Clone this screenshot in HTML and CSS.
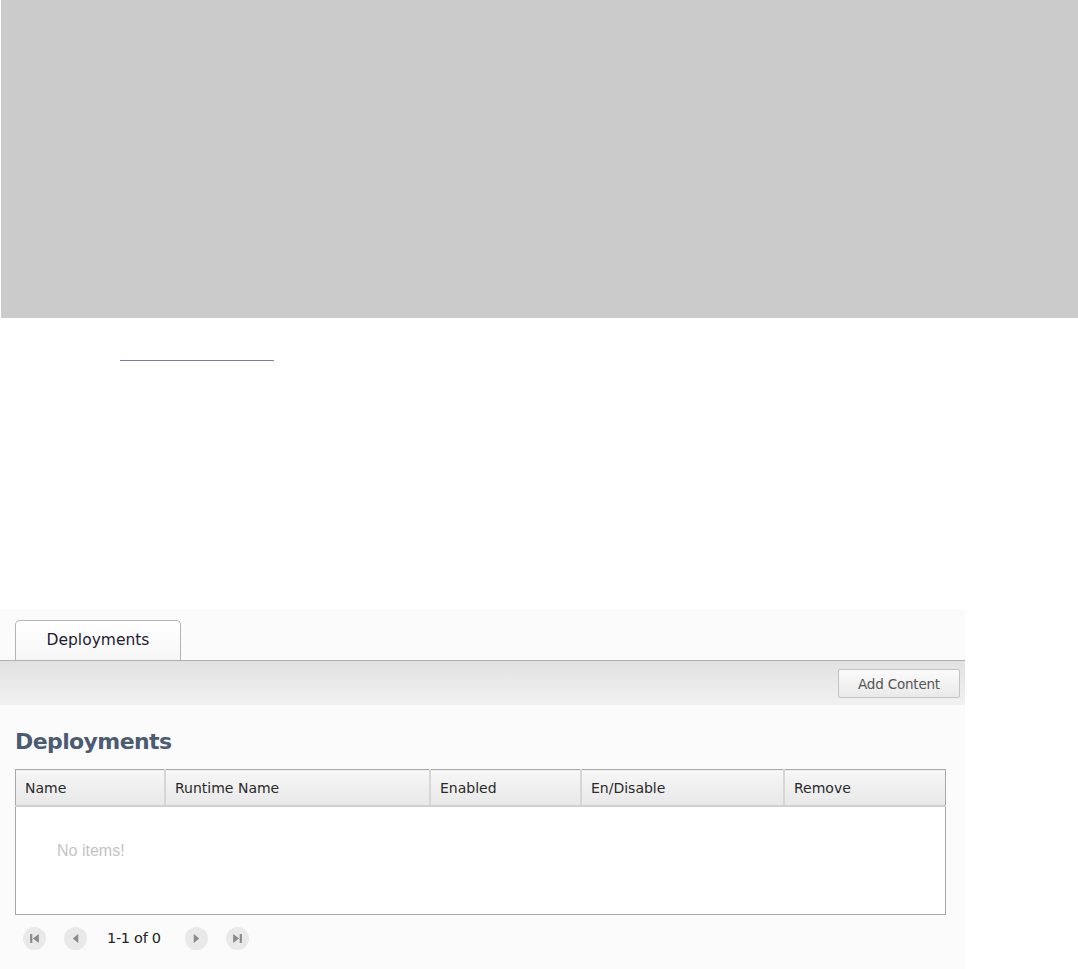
FILE: index.html
```html
<!DOCTYPE html>
<html lang="en">
<head>
    <meta charset="UTF-8">
    <title>Deployments</title>
    <link rel="stylesheet" href="styles.css">
</head>
<body>
    <div class="top-banner"></div>

    <div class="link-row">
        <a href="#" class="empty-link"></a>
    </div>

    <div class="dp-panel">
        <div class="dp-tabs">
            <div class="dp-tab">Deployments</div>
        </div>
        <div class="dp-toolbar">
            <button class="dp-btn">Add Content</button>
        </div>

        <div class="dp-content">
            <h2 class="dp-title">Deployments</h2>

            <table class="dp-table">
                <thead>
                    <tr>
                        <th class="col-name">Name</th>
                        <th class="col-runtime">Runtime Name</th>
                        <th class="col-enabled">Enabled</th>
                        <th class="col-toggle">En/Disable</th>
                        <th class="col-remove">Remove</th>
                    </tr>
                </thead>
                <tbody>
                    <tr>
                        <td colspan="5" class="dp-empty">No items!</td>
                    </tr>
                </tbody>
            </table>

            <div class="dp-pager">
                <span class="pg-btn">
                    <svg width="11" height="11" viewBox="0 0 10 10"><rect x="1" y="1" width="2" height="8" fill="#8a8a8a"/><path d="M9 1 L3.5 5 L9 9 Z" fill="#8a8a8a"/></svg>
                </span>
                <span class="pg-btn">
                    <svg width="11" height="11" viewBox="0 0 10 10"><path d="M7.5 1 L2.5 5 L7.5 9 Z" fill="#8a8a8a"/></svg>
                </span>
                <span class="pg-text">1-1 of 0</span>
                <span class="pg-btn">
                    <svg width="11" height="11" viewBox="0 0 10 10"><path d="M2.5 1 L7.5 5 L2.5 9 Z" fill="#8a8a8a"/></svg>
                </span>
                <span class="pg-btn">
                    <svg width="11" height="11" viewBox="0 0 10 10"><path d="M1 1 L6.5 5 L1 9 Z" fill="#8a8a8a"/><rect x="7" y="1" width="2" height="8" fill="#8a8a8a"/></svg>
                </span>
            </div>
        </div>
    </div>
</body>
</html>
```

FILE: styles.css
```css
/* Page base */
body {
    margin: 0;
    background: #ffffff;
    font-family: "DejaVu Sans", Verdana, sans-serif;
    font-size: 14px;
    color: #222222;
}

/* Grey placeholder block at the top */
.top-banner {
    height: 318px;
    margin-left: 1px;
    background-color: #cbcbcb;
}

/* Empty underlined link */
.link-row {
    height: 291px;
    padding-left: 120px;
    box-sizing: border-box;
    padding-top: 42px;
}

.empty-link {
    display: block;
    width: 154px;
    height: 0;
    border-bottom: 1px solid #7a7aaa;
}

/* Deployments panel */
.dp-panel {
    width: 965px;
    background-color: #fbfbfb;
    padding-bottom: 20px;
}

.dp-tabs {
    padding: 11px 0 0 15px;
    display: flex;
}

.dp-tab {
    width: 166px;
    height: 40px;
    box-sizing: border-box;
    border: 1px solid #b4b4b4;
    border-bottom: none;
    border-radius: 5px 5px 0 0;
    background: linear-gradient(#ffffff, #f6f6f6);
    color: #1f1a33;
    font-size: 15.5px;
    text-align: center;
    padding-top: 10px;
}

.dp-toolbar {
    height: 45px;
    border-top: 1px solid #b0b0b0;
    background: linear-gradient(#e2e2e2, #f1f1f1);
    display: flex;
    justify-content: flex-end;
    align-items: flex-start;
    padding: 8px 5px 0 0;
    box-sizing: border-box;
}

.dp-btn {
    width: 122px;
    height: 29px;
    border: 1px solid #c4c4c4;
    border-radius: 2px;
    background: linear-gradient(#fbfbfb, #e9e9e9);
    color: #555555;
    font-family: "DejaVu Sans", Verdana, sans-serif;
    font-size: 13.5px;
    letter-spacing: -0.2px;
    cursor: pointer;
}

/* Main content */
.dp-content {
    padding: 0 19px 0 15px;
}

.dp-title {
    margin: 0;
    padding-top: 26px;
    height: 42px;
    box-sizing: border-box;
    font-size: 22px;
    font-weight: bold;
    color: #4c5b74;
    line-height: 22px;
    letter-spacing: -0.6px;
}

.dp-table {
    width: 931px;
    margin-top: 22px;
    border-collapse: collapse;
    border: 1px solid #a8a8a8;
    background: #ffffff;
}

.dp-table th {
    height: 35px;
    padding: 0 0 0 9px;
    text-align: left;
    font-weight: normal;
    font-size: 14px;
    color: #2a2a2a;
    border-left: 2px solid #d6d6d6;
    border-bottom: 2px solid #d0d0d0;
    background: linear-gradient(#f6f6f6, #e8e8e8);
}

.dp-table th:first-child {
    border-left: none;
}

.col-name { width: 139px; }
.col-runtime { width: 254px; }
.col-enabled { width: 140px; }
.col-toggle { width: 192px; }

.dp-empty {
    height: 72px;
    padding: 35px 0 0 41px;
    vertical-align: top;
    font-family: "Liberation Sans", Arial, sans-serif;
    font-size: 16px;
    color: #c4c4c4;
}

/* Pager */
.dp-pager {
    display: flex;
    align-items: center;
    height: 46px;
    padding-left: 8px;
}

.pg-btn {
    width: 23px;
    height: 23px;
    border-radius: 50%;
    background-color: #e9e9e9;
    display: flex;
    align-items: center;
    justify-content: center;
    margin-right: 18px;
}

.pg-text {
    font-size: 14.5px;
    letter-spacing: -0.3px;
    color: #222222;
    margin: 0 24px 0 2px;
}
```
